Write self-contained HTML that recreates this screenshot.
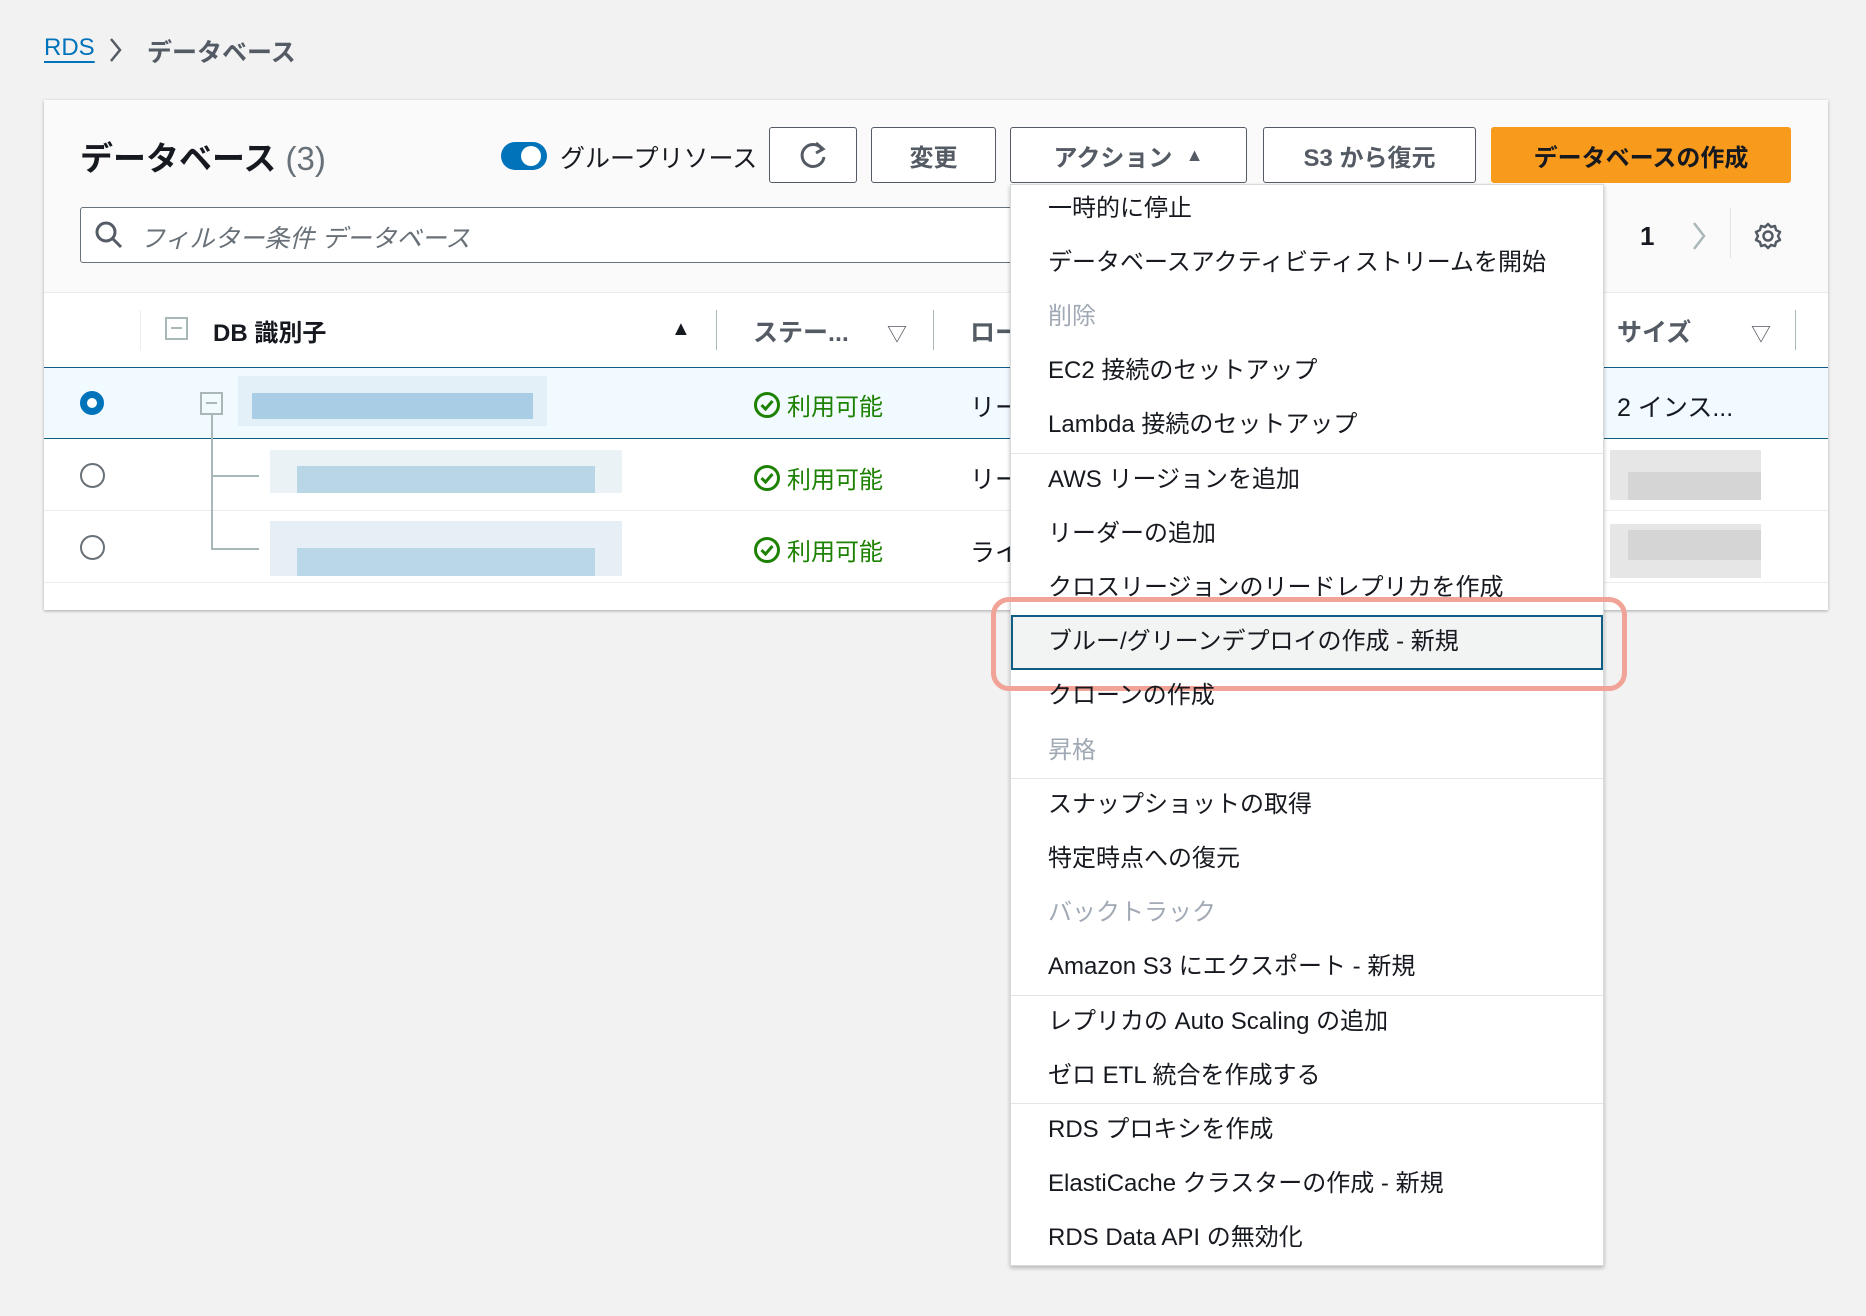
<!DOCTYPE html>
<html><head><meta charset="utf-8"><style>
*{box-sizing:border-box;margin:0;padding:0}
body{width:1866px;height:1316px;background:#f2f2f2;font-family:"Liberation Sans","Noto Sans CJK JP",sans-serif;color:#16191f;position:relative;overflow:hidden}
.a{position:absolute;white-space:nowrap}
.btn{position:absolute;top:127px;height:56px;border:1.5px solid #545b64;border-radius:3px;background:#fff;font-size:24px;font-weight:bold;color:#545b64;display:flex;align-items:center;justify-content:center}
.mi{position:absolute;left:1048px;font-size:24px;color:#16191f;line-height:30px}
.dis{color:#a0a9b4}
.sep{position:absolute;left:1011px;width:592px;height:1px;background:#e3e6e8}
.st{position:absolute;left:753px;font-size:24px;color:#1d8102;display:flex;align-items:center;gap:6px}
</style></head><body>
<div class="a" style="left:44px;top:34px;font-size:24px;color:#0073bb;text-decoration:underline;text-underline-offset:6px">RDS</div>
<svg class="a" style="left:108px;top:36px" width="16" height="28"><path d="M3 3 L12 14 L3 25" stroke="#545b64" stroke-width="2.5" fill="none"/></svg>
<div class="a" style="left:147px;top:33px;font-size:25px;color:#545b64;font-weight:bold">データベース</div>

<div class="a" style="left:44px;top:100px;width:1784px;height:510px;background:#fff;box-shadow:0 1px 3px rgba(0,0,0,.3)"></div>
<div class="a" style="left:44px;top:100px;width:1784px;height:193px;background:#fafafa;border-bottom:1px solid #eaeded"></div>
<div class="a" style="left:80px;top:132px;font-size:33px;font-weight:bold">データベース <span style="font-weight:normal;color:#687078">(3)</span></div>
<div class="a" style="left:501px;top:142px;width:46px;height:28px;border-radius:14px;background:#0073bb"></div>
<div class="a" style="left:521px;top:146px;width:20px;height:20px;border-radius:50%;background:#fff"></div>
<div class="a" style="left:560px;top:139px;font-size:25px;color:#16191f">グループリソース</div>
<div class="btn" style="left:769px;width:88px"><svg width="34" height="34" viewBox="0 0 34 34"><path d="M26 11 A11 11 0 1 0 28 19" stroke="#545b64" stroke-width="3" fill="none"/><path d="M20 5 L27 11 L20 15" stroke="#545b64" stroke-width="3" fill="none"/></svg></div>
<div class="btn" style="left:871px;width:125px">変更</div>
<div class="btn" style="left:1010px;width:237px">アクション&nbsp;&nbsp;<span style="font-size:18px">▲</span></div>
<div class="btn" style="left:1263px;width:213px">S3 から復元</div>
<div class="btn" style="left:1491px;width:300px;background:#f89a1c;border-color:#f89a1c;color:#16191f">データベースの作成</div>

<div class="a" style="left:80px;top:207px;width:960px;height:56px;border:1.5px solid #687078;border-radius:3px;background:#fff"></div>
<svg class="a" style="left:94px;top:220px" width="30" height="30"><circle cx="12" cy="12" r="9" stroke="#545b64" stroke-width="3" fill="none"/><path d="M19 19 L27 27" stroke="#545b64" stroke-width="3"/></svg>
<div class="a" style="left:140px;top:219px;font-size:25px;color:#687078;font-style:italic">フィルター条件 データベース</div>
<div class="a" style="left:1640px;top:221px;font-size:26px;font-weight:bold">1</div>
<svg class="a" style="left:1690px;top:220px" width="18" height="32"><path d="M4 3 L14 16 L4 29" stroke="#aab7b8" stroke-width="2.5" fill="none"/></svg>
<div class="a" style="left:1730px;top:208px;width:1px;height:50px;background:#e3e6e8"></div>
<svg class="a" style="left:1753px;top:221px" width="30" height="30" viewBox="0 0 30 30"><circle cx="15" cy="15" r="4.5" stroke="#545b64" stroke-width="2.5" fill="none"/><path d="M15 3 L18 6 L22 5 L23 9 L27 11 L25 15 L27 19 L23 21 L22 25 L18 24 L15 27 L12 24 L8 25 L7 21 L3 19 L5 15 L3 11 L7 9 L8 5 L12 6 Z" stroke="#545b64" stroke-width="2.5" fill="none" stroke-linejoin="round"/></svg>

<!-- header -->
<div class="a" style="left:140px;top:310px;width:1px;height:40px;background:#eaeded"></div>
<div class="a" style="left:165px;top:317px;width:23px;height:23px;border:2px solid #aab7b8"></div><div class="a" style="left:171px;top:327px;width:11px;height:2px;background:#aab7b8"></div>
<div class="a" style="left:213px;top:313px;font-size:24px;font-weight:bold">DB 識別子</div>
<div class="a" style="left:671px;top:318px;font-size:20px">▲</div>
<div class="a" style="left:716px;top:310px;width:1px;height:40px;background:#aab7b8"></div>
<div class="a" style="left:753px;top:313px;font-size:25px;font-weight:bold;color:#545b64">ステー...</div>
<div class="a" style="left:887px;top:318px;font-size:20px;color:#545b64">▽</div>
<div class="a" style="left:933px;top:310px;width:1px;height:40px;background:#aab7b8"></div>
<div class="a" style="left:970px;top:313px;font-size:25px;font-weight:bold;color:#545b64">ロー</div>
<div class="a" style="left:1617px;top:313px;font-size:25px;font-weight:bold;color:#545b64">サイズ</div>
<div class="a" style="left:1751px;top:318px;font-size:20px;color:#545b64">▽</div>
<div class="a" style="left:1795px;top:310px;width:1px;height:40px;background:#aab7b8"></div>

<!-- rows -->
<div class="a" style="left:44px;top:367px;width:1784px;height:72px;background:#f1faff;border-top:1.5px solid #0f5c85;border-bottom:1.5px solid #0f5c85"></div>
<div class="a" style="left:44px;top:510px;width:1784px;height:1px;background:#eaeded"></div>
<div class="a" style="left:44px;top:582px;width:1784px;height:1px;background:#eaeded"></div>
<div class="a" style="left:80px;top:391px;width:24px;height:24px;border-radius:50%;border:7px solid #0073bb;background:#fff"></div>
<div class="a" style="left:80px;top:463px;width:25px;height:25px;border-radius:50%;border:2px solid #687078"></div>
<div class="a" style="left:80px;top:535px;width:25px;height:25px;border-radius:50%;border:2px solid #687078"></div>
<div class="a" style="left:200px;top:392px;width:23px;height:23px;border:2px solid #aab7b8"></div><div class="a" style="left:206px;top:402px;width:11px;height:2px;background:#aab7b8"></div>
<div class="a" style="left:211px;top:415px;width:1.5px;height:133px;background:#aab7b8"></div>
<div class="a" style="left:211px;top:475px;width:48px;height:1.5px;background:#aab7b8"></div>
<div class="a" style="left:211px;top:548px;width:48px;height:1.5px;background:#aab7b8"></div>
<div class="a" style="left:238px;top:376px;width:309px;height:50px;background:#e4f0f7"></div>
<div class="a" style="left:252px;top:393px;width:281px;height:26px;background:#a9cde4"></div>
<div class="a" style="left:270px;top:450px;width:352px;height:43px;background:#eaf2f6"></div>
<div class="a" style="left:297px;top:466px;width:298px;height:27px;background:#b8d6e6"></div>
<div class="a" style="left:270px;top:521px;width:352px;height:55px;background:#e6eff5"></div>
<div class="a" style="left:297px;top:548px;width:298px;height:28px;background:#bad7e7"></div>
<div class="a" style="left:1610px;top:450px;width:151px;height:50px;background:#e6e6e6"></div>
<div class="a" style="left:1628px;top:472px;width:133px;height:28px;background:#d5d5d5"></div>
<div class="a" style="left:1610px;top:524px;width:151px;height:54px;background:#e6e6e6"></div>
<div class="a" style="left:1628px;top:530px;width:133px;height:30px;background:#d5d5d5"></div>

<svg width="0" height="0" style="position:absolute"><defs><g id="ok"><circle cx="14" cy="14" r="11.5" stroke="#1d8102" stroke-width="3" fill="none"/><path d="M8.5 14 L12.5 18 L19.5 10" stroke="#1d8102" stroke-width="3" fill="none"/></g></defs></svg>
<div class="st" style="top:387px"><svg width="28" height="28"><use href="#ok"/></svg>利用可能</div>
<div class="st" style="top:460px"><svg width="28" height="28"><use href="#ok"/></svg>利用可能</div>
<div class="st" style="top:532px"><svg width="28" height="28"><use href="#ok"/></svg>利用可能</div>
<div class="a" style="left:970px;top:388px;font-size:25px">リー</div>
<div class="a" style="left:970px;top:460px;font-size:25px">リー</div>
<div class="a" style="left:970px;top:533px;font-size:25px">ライ</div>
<div class="a" style="left:1617px;top:388px;font-size:25px">2 インス...</div>

<!-- menu -->
<div class="a" style="left:1010px;top:184px;width:594px;height:1082px;background:#fff;border:1px solid #d5dbdb;box-shadow:0 2px 4px rgba(0,0,0,.25)"></div>
<div class="sep" style="top:453px"></div>
<div class="sep" style="top:778px"></div>
<div class="sep" style="top:995px"></div>
<div class="sep" style="top:1103px"></div>
<div class="a" style="left:1011px;top:615px;width:592px;height:55px;background:#f2f3f3;border:2.5px solid #0f5c85"></div>
<div class="a" style="left:991px;top:597px;width:636px;height:94px;border:5px solid #f2a397;border-radius:18px"></div>
<div class="mi" style="top:194px">一時的に停止</div>
<div class="mi" style="top:248px">データベースアクティビティストリームを開始</div>
<div class="mi dis" style="top:302px">削除</div>
<div class="mi" style="top:356px">EC2 接続のセットアップ</div>
<div class="mi" style="top:410px">Lambda 接続のセットアップ</div>
<div class="mi" style="top:465px">AWS リージョンを追加</div>
<div class="mi" style="top:519px">リーダーの追加</div>
<div class="mi" style="top:573px">クロスリージョンのリードレプリカを作成</div>
<div class="mi" style="top:627px">ブルー/グリーンデプロイの作成 - 新規</div>
<div class="mi" style="top:681px">クローンの作成</div>
<div class="mi dis" style="top:736px">昇格</div>
<div class="mi" style="top:790px">スナップショットの取得</div>
<div class="mi" style="top:844px">特定時点への復元</div>
<div class="mi dis" style="top:898px">バックトラック</div>
<div class="mi" style="top:952px">Amazon S3 にエクスポート - 新規</div>
<div class="mi" style="top:1007px">レプリカの Auto Scaling の追加</div>
<div class="mi" style="top:1061px">ゼロ ETL 統合を作成する</div>
<div class="mi" style="top:1115px">RDS プロキシを作成</div>
<div class="mi" style="top:1169px">ElastiCache クラスターの作成 - 新規</div>
<div class="mi" style="top:1223px">RDS Data API の無効化</div>
</body></html>
